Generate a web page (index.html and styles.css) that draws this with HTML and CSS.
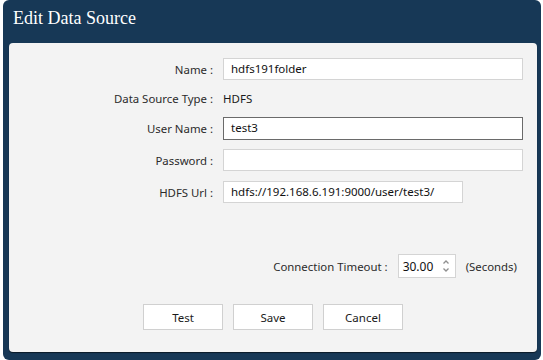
FILE: index.html
```html
<!DOCTYPE html>
<html>
<head>
<meta charset="utf-8">
<link rel="stylesheet" href="styles.css">
</head>
<body>
<div class="dialog">
  <div class="dialog-header">Edit Data Source</div>
  <div class="dialog-body">
    <div class="form">
      <label class="lbl">Name :</label>
      <div class="field wide">hdfs191folder</div>
      <label class="lbl">Data Source Type :</label>
      <div class="value">HDFS</div>
      <label class="lbl">User Name :</label>
      <div class="field wide focused">test3</div>
      <label class="lbl">Password :</label>
      <div class="field wide"></div>
      <label class="lbl">HDFS Url :</label>
      <div class="field url">hdfs://192.168.6.191:9000/user/test3/</div>
    </div>
    <div class="timeout-row">
      <span class="lbl">Connection Timeout :</span>
      <div class="spinner">
        <span class="spin-value">30.00</span>
        <span class="spin-arrows">
          <svg width="8" height="14" viewBox="0 0 8 14"><path d="M1.5 4.5 L4 2 L6.5 4.5" fill="none" stroke="#8f8f8f" stroke-width="1.3"/><path d="M1.5 9.5 L4 12 L6.5 9.5" fill="none" stroke="#8f8f8f" stroke-width="1.3"/></svg>
        </span>
      </div>
      <span class="unit">(Seconds)</span>
    </div>
    <div class="buttons">
      <button class="btn">Test</button>
      <button class="btn">Save</button>
      <button class="btn">Cancel</button>
    </div>
  </div>
</div>
</body>
</html>
```

FILE: styles.css
```css
html, body {
  margin: 0;
  padding: 0;
  background: #ffffff;
}
body {
  width: 543px;
  height: 360px;
  overflow: hidden;
  font-family: "Noto Sans", "Open Sans", sans-serif;
  font-size: 11.4px;
  color: #2b2b2b;
}
.dialog {
  margin-left: 3px;
  width: 538px;
  height: 360px;
  background: #173856;
  border-radius: 6px;
  box-sizing: border-box;
  padding: 0 4px 8px 6px;
  display: flex;
  flex-direction: column;
}
.dialog-header {
  height: 43px;
  box-sizing: border-box;
  padding: 6px 0 0 4px;
  font-family: "Liberation Serif", serif;
  font-size: 18px;
  color: #ffffff;
  line-height: 24px;
}
.dialog-body {
  flex: 1;
  background: #f3f3f3;
  border-radius: 4px;
  box-shadow: 0 1px 1px rgba(0, 0, 0, 0.55);
  padding-top: 15px;
}
.form {
  display: grid;
  grid-template-columns: 204px 300px;
  grid-template-rows: 22px 17px 22px 22px 22px;
  column-gap: 10px;
  row-gap: 10px;
  align-items: center;
}
.lbl {
  text-align: right;
  color: #2b2b2b;
  white-space: nowrap;
}
.value {
  color: #1a1a1a;
  font-size: 11.5px;
}
.field {
  height: 22px;
  box-sizing: border-box;
  background: #ffffff;
  border: 1px solid #d4d4d4;
  padding: 0 7px;
  line-height: 20px;
  font-size: 11.5px;
  color: #111;
  white-space: nowrap;
  overflow: hidden;
}
.field.wide {
  width: 300px;
}
.field.url {
  width: 240px;
}
.field.focused {
  border-color: #6a6a6a;
  height: 23px;
}
.timeout-row {
  margin-top: 51px;
  display: flex;
  justify-content: flex-end;
  align-items: center;
  gap: 10px;
  padding-right: 20px;
}
.spinner {
  width: 58px;
  height: 24px;
  box-sizing: border-box;
  background: #ffffff;
  border: 1px solid #d4d4d4;
  display: flex;
  align-items: center;
  justify-content: space-between;
  padding: 0 5px 0 4px;
}
.spin-value {
  font-size: 12px;
  color: #111;
}
.spin-arrows {
  display: flex;
}
.unit {
  color: #2b2b2b;
}
.buttons {
  margin-top: 26px;
  display: flex;
  justify-content: center;
  gap: 10px;
}
.btn {
  width: 80px;
  height: 26px;
  background: #ffffff;
  border: 1px solid #d0d0d0;
  font-family: "Noto Sans", "Open Sans", sans-serif;
  font-size: 11.5px;
  color: #1a1a1a;
  padding: 0;
}
```
